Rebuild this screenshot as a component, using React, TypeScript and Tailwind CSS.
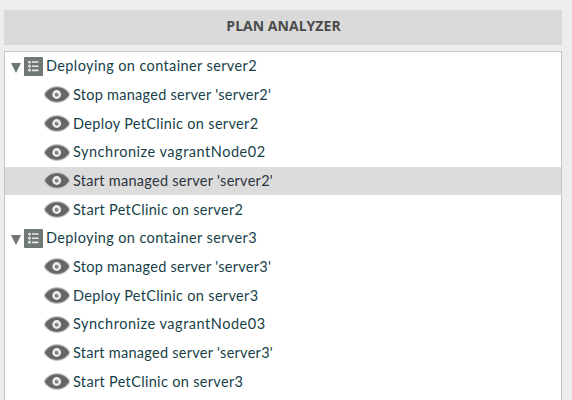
type Step = { label: string; spacing: string; selected?: boolean };
type Group = { label: string; spacing: string; steps: Step[] };

const groups: Group[] = [
  {
    label: "Deploying on container server2",
    spacing: "tracking-[0.38px]",
    steps: [
      { label: "Stop managed server 'server2'", spacing: "tracking-[0.26px]" },
      { label: "Deploy PetClinic on server2", spacing: "tracking-[0.32px]" },
      { label: "Synchronize vagrantNode02", spacing: "tracking-[0.52px]" },
      { label: "Start managed server 'server2'", spacing: "tracking-[0.27px]", selected: true },
      { label: "Start PetClinic on server2", spacing: "tracking-[0.32px]" },
    ],
  },
  {
    label: "Deploying on container server3",
    spacing: "tracking-[0.38px]",
    steps: [
      { label: "Stop managed server 'server3'", spacing: "tracking-[0.26px]" },
      { label: "Deploy PetClinic on server3", spacing: "tracking-[0.32px]" },
      { label: "Synchronize vagrantNode03", spacing: "tracking-[0.52px]" },
      { label: "Start managed server 'server3'", spacing: "tracking-[0.27px]" },
      { label: "Start PetClinic on server3", spacing: "tracking-[0.32px]" },
    ],
  },
];

function Eye() {
  return (
    <svg className="h-[17px] w-[26px] shrink-0" viewBox="0 0 26 17">
      <path d="M0 8.500C0 6 2 4.500 4.500 2.800C7 1 9.500 0 13 0s6 1 8.500 2.800C24 4.500 26 6 26 8.500s-2 4-4.500 5.700C19 16 16.500 17 13 17s-6-1-8.500-2.800C2 12.500 0 11 0 8.500Z" fill="#c6c6c6" />
      <path d="M.8 8.500C2.500 5.500 4.500 3.800 7 2.600C9 1.700 11 1.300 13 1.300s4 .4 6 1.300c2.500 1.200 4.500 2.900 6.200 5.900c-1.700 3-3.700 4.700-6.200 5.900c-2 .9-4 1.300-6 1.300s-4-.4-6-1.300C4.500 13.200 2.500 11.500.8 8.500Z" fill="#666" />
      <circle cx="12.700" cy="8.500" r="4.400" fill="#ececec" />
      <circle cx="12.700" cy="8.700" r="1.900" fill="#757575" />
      <circle cx="13.300" cy="8" r=".8" fill="#bbb" />
    </svg>
  );
}

function GroupIcon() {
  return (
    <svg className="mt-[1px] h-[19px] w-[19px] shrink-0" viewBox="0 0 19 19">
      <rect width="19" height="19" rx=".7" fill="#6f7876" />
      <path d="M5.500 4v10.500" stroke="#a9afad" strokeWidth="1.500" />
      <path d="M4 5h3M4 9.200h3M4 13.400h3M8 5h6.500M8 9.200h6.500M8 13.400h6.500" stroke="#e9ebea" strokeWidth="1.600" />
    </svg>
  );
}

export default function App() {
  return (
    <div className="flex h-[400px] w-[572px] flex-col overflow-hidden bg-[#ededed] pt-[10px] pl-[4px]">
      <header className="flex h-[35px] w-[558px] shrink-0 items-center justify-center bg-[#d9d9d9] pb-[4px] pl-[1px] font-['Open_Sans',sans-serif] text-[14px] font-bold tracking-[0.03px] text-[#4b4b4b]">
        PLAN ANALYZER
      </header>
      <main className="mt-[6px] w-[558px] flex-1 overflow-hidden border border-b-0 border-[#c3c6c6] bg-white font-['Lato',sans-serif] text-[14.5px] text-[#173f49]">
        {groups.map((group) => (
          <section key={group.label}>
            <div className="flex h-[28.67px] items-center pl-[6px]">
              <svg className="mt-[3px] mr-[3px] h-[10px] w-[10px]" viewBox="0 0 10 10">
                <path d="M0 0h10L5 10Z" fill="#6f7775" />
              </svg>
              <GroupIcon />
              <span className={`ml-[3px] whitespace-nowrap ${group.spacing}`}>{group.label}</span>
            </div>
            {group.steps.map((step) => (
              <div
                key={step.label}
                className={`flex h-[28.67px] items-center pl-[39px] ${step.selected ? "bg-[#dcdcdc] text-[#2d3340]" : ""}`}
              >
                <Eye />
                <span className={`ml-[3px] whitespace-nowrap ${step.spacing}`}>{step.label}</span>
              </div>
            ))}
          </section>
        ))}
      </main>
    </div>
  );
}
